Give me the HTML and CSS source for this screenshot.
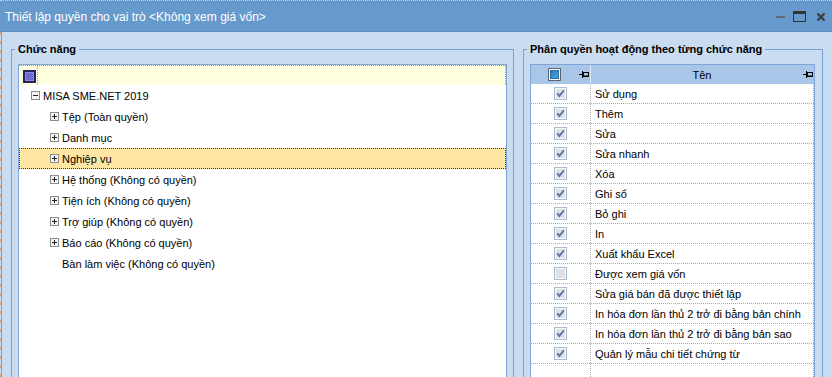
FILE: index.html
```html
<!DOCTYPE html>
<html lang="vi">
<head>
<meta charset="utf-8">
<title>Thiết lập quyền</title>
<link rel="stylesheet" href="styles.css">
</head>
<body>
<div class="window">
  <div class="titlebar">
    <span class="title">Thiết lập quyền cho vai trò &lt;Không xem giá vốn&gt;</span>
    <div class="controls">
      <svg class="ctl-min" width="9" height="11" viewBox="0 0 9 11"><rect x="0" y="5" width="9" height="2" fill="#5f6b7a"/></svg>
      <svg class="ctl-max" width="13" height="11" viewBox="0 0 13 11"><rect x="0.5" y="0.5" width="12" height="10" fill="none" stroke="#333"/><rect x="0" y="0" width="13" height="3" fill="#333"/></svg>
      <svg class="ctl-close" width="8" height="8" viewBox="0 0 8 8"><path d="M0.5 0.5L7.5 7.5M7.5 0.5L0.5 7.5" stroke="#3a3a3a" stroke-width="2"/></svg>
    </div>
  </div>
  <div class="main">
    <fieldset class="group group-left">
      <legend>Chức năng</legend>
      <div class="tree">
        <div class="tree-new"><span class="new-check"></span><span class="new-cell"></span></div>
        <div class="node lvl0">
          <svg class="exp" width="9" height="9" viewBox="0 0 9 9"><rect x="0.5" y="0.5" width="8" height="8" fill="#f4f4f4" stroke="#8c8c8c"/><path d="M2 4.5h5" stroke="#222"/></svg>
          <span>MISA SME.NET 2019</span>
        </div>
        <div class="node lvl1">
          <svg class="exp" width="9" height="9" viewBox="0 0 9 9"><rect x="0.5" y="0.5" width="8" height="8" fill="#f4f4f4" stroke="#8c8c8c"/><path d="M2 4.5h5M4.5 2v5" stroke="#222"/></svg>
          <span>Tệp (Toàn quyền)</span>
        </div>
        <div class="node lvl1">
          <svg class="exp" width="9" height="9" viewBox="0 0 9 9"><rect x="0.5" y="0.5" width="8" height="8" fill="#f4f4f4" stroke="#8c8c8c"/><path d="M2 4.5h5M4.5 2v5" stroke="#222"/></svg>
          <span>Danh mục</span>
        </div>
        <div class="node lvl1 selected">
          <svg class="exp" width="9" height="9" viewBox="0 0 9 9"><rect x="0.5" y="0.5" width="8" height="8" fill="#f4f4f4" stroke="#8c8c8c"/><path d="M2 4.5h5M4.5 2v5" stroke="#222"/></svg>
          <span>Nghiệp vụ</span>
        </div>
        <div class="node lvl1">
          <svg class="exp" width="9" height="9" viewBox="0 0 9 9"><rect x="0.5" y="0.5" width="8" height="8" fill="#f4f4f4" stroke="#8c8c8c"/><path d="M2 4.5h5M4.5 2v5" stroke="#222"/></svg>
          <span>Hệ thống (Không có quyền)</span>
        </div>
        <div class="node lvl1">
          <svg class="exp" width="9" height="9" viewBox="0 0 9 9"><rect x="0.5" y="0.5" width="8" height="8" fill="#f4f4f4" stroke="#8c8c8c"/><path d="M2 4.5h5M4.5 2v5" stroke="#222"/></svg>
          <span>Tiện ích (Không có quyền)</span>
        </div>
        <div class="node lvl1">
          <svg class="exp" width="9" height="9" viewBox="0 0 9 9"><rect x="0.5" y="0.5" width="8" height="8" fill="#f4f4f4" stroke="#8c8c8c"/><path d="M2 4.5h5M4.5 2v5" stroke="#222"/></svg>
          <span>Trợ giúp (Không có quyền)</span>
        </div>
        <div class="node lvl1">
          <svg class="exp" width="9" height="9" viewBox="0 0 9 9"><rect x="0.5" y="0.5" width="8" height="8" fill="#f4f4f4" stroke="#8c8c8c"/><path d="M2 4.5h5M4.5 2v5" stroke="#222"/></svg>
          <span>Báo cáo (Không có quyền)</span>
        </div>
        <div class="node lvl1 leaf">
          <span>Bàn làm việc (Không có quyền)</span>
        </div>
      </div>
    </fieldset>

    <fieldset class="group group-right">
      <legend>Phân quyền hoạt động theo từng chức năng</legend>
      <div class="grid">
        <div class="grid-head">
          <div class="hc hc-check">
            <span class="hcheck"></span>
            <svg class="pin" width="10" height="7" viewBox="0 0 10 7"><path d="M0 3.5h3M3.5 0v7" stroke="#000"/><rect x="4.5" y="1.5" width="5" height="4" fill="none" stroke="#000"/><path d="M4 5h6" stroke="#000"/></svg>
          </div>
          <div class="hc hc-name">
            <span class="hname">Tên</span>
            <svg class="pin" width="10" height="7" viewBox="0 0 10 7"><path d="M0 3.5h3M3.5 0v7" stroke="#000"/><rect x="4.5" y="1.5" width="5" height="4" fill="none" stroke="#000"/><path d="M4 5h6" stroke="#000"/></svg>
          </div>
        </div>
        <div class="row"><div class="c1"><svg class="cb" width="13" height="13" viewBox="0 0 13 13"><rect x="0.5" y="0.5" width="12" height="12" fill="#f7f7f7" stroke="#a7bbd9"/><rect x="2" y="2" width="9" height="9" fill="#e1e1e1"/><path d="M3.2 6.3l2.2 2.6L9.8 3.4" fill="none" stroke="#5a77a3" stroke-width="1.9"/></svg></div><div class="c2">Sử dụng</div></div>
        <div class="row"><div class="c1"><svg class="cb" width="13" height="13" viewBox="0 0 13 13"><rect x="0.5" y="0.5" width="12" height="12" fill="#f7f7f7" stroke="#a7bbd9"/><rect x="2" y="2" width="9" height="9" fill="#e1e1e1"/><path d="M3.2 6.3l2.2 2.6L9.8 3.4" fill="none" stroke="#5a77a3" stroke-width="1.9"/></svg></div><div class="c2">Thêm</div></div>
        <div class="row"><div class="c1"><svg class="cb" width="13" height="13" viewBox="0 0 13 13"><rect x="0.5" y="0.5" width="12" height="12" fill="#f7f7f7" stroke="#a7bbd9"/><rect x="2" y="2" width="9" height="9" fill="#e1e1e1"/><path d="M3.2 6.3l2.2 2.6L9.8 3.4" fill="none" stroke="#5a77a3" stroke-width="1.9"/></svg></div><div class="c2">Sửa</div></div>
        <div class="row"><div class="c1"><svg class="cb" width="13" height="13" viewBox="0 0 13 13"><rect x="0.5" y="0.5" width="12" height="12" fill="#f7f7f7" stroke="#a7bbd9"/><rect x="2" y="2" width="9" height="9" fill="#e1e1e1"/><path d="M3.2 6.3l2.2 2.6L9.8 3.4" fill="none" stroke="#5a77a3" stroke-width="1.9"/></svg></div><div class="c2">Sửa nhanh</div></div>
        <div class="row"><div class="c1"><svg class="cb" width="13" height="13" viewBox="0 0 13 13"><rect x="0.5" y="0.5" width="12" height="12" fill="#f7f7f7" stroke="#a7bbd9"/><rect x="2" y="2" width="9" height="9" fill="#e1e1e1"/><path d="M3.2 6.3l2.2 2.6L9.8 3.4" fill="none" stroke="#5a77a3" stroke-width="1.9"/></svg></div><div class="c2">Xóa</div></div>
        <div class="row"><div class="c1"><svg class="cb" width="13" height="13" viewBox="0 0 13 13"><rect x="0.5" y="0.5" width="12" height="12" fill="#f7f7f7" stroke="#a7bbd9"/><rect x="2" y="2" width="9" height="9" fill="#e1e1e1"/><path d="M3.2 6.3l2.2 2.6L9.8 3.4" fill="none" stroke="#5a77a3" stroke-width="1.9"/></svg></div><div class="c2">Ghi sổ</div></div>
        <div class="row"><div class="c1"><svg class="cb" width="13" height="13" viewBox="0 0 13 13"><rect x="0.5" y="0.5" width="12" height="12" fill="#f7f7f7" stroke="#a7bbd9"/><rect x="2" y="2" width="9" height="9" fill="#e1e1e1"/><path d="M3.2 6.3l2.2 2.6L9.8 3.4" fill="none" stroke="#5a77a3" stroke-width="1.9"/></svg></div><div class="c2">Bỏ ghi</div></div>
        <div class="row"><div class="c1"><svg class="cb" width="13" height="13" viewBox="0 0 13 13"><rect x="0.5" y="0.5" width="12" height="12" fill="#f7f7f7" stroke="#a7bbd9"/><rect x="2" y="2" width="9" height="9" fill="#e1e1e1"/><path d="M3.2 6.3l2.2 2.6L9.8 3.4" fill="none" stroke="#5a77a3" stroke-width="1.9"/></svg></div><div class="c2">In</div></div>
        <div class="row"><div class="c1"><svg class="cb" width="13" height="13" viewBox="0 0 13 13"><rect x="0.5" y="0.5" width="12" height="12" fill="#f7f7f7" stroke="#a7bbd9"/><rect x="2" y="2" width="9" height="9" fill="#e1e1e1"/><path d="M3.2 6.3l2.2 2.6L9.8 3.4" fill="none" stroke="#5a77a3" stroke-width="1.9"/></svg></div><div class="c2">Xuất khẩu Excel</div></div>
        <div class="row"><div class="c1"><svg class="cb" width="13" height="13" viewBox="0 0 13 13"><rect x="0.5" y="0.5" width="12" height="12" fill="#f7f7f7" stroke="#a7bbd9"/><rect x="2" y="2" width="9" height="9" fill="#e1e1e1"/></svg></div><div class="c2">Được xem giá vốn</div></div>
        <div class="row"><div class="c1"><svg class="cb" width="13" height="13" viewBox="0 0 13 13"><rect x="0.5" y="0.5" width="12" height="12" fill="#f7f7f7" stroke="#a7bbd9"/><rect x="2" y="2" width="9" height="9" fill="#e1e1e1"/><path d="M3.2 6.3l2.2 2.6L9.8 3.4" fill="none" stroke="#5a77a3" stroke-width="1.9"/></svg></div><div class="c2">Sửa giá bán đã được thiết lập</div></div>
        <div class="row"><div class="c1"><svg class="cb" width="13" height="13" viewBox="0 0 13 13"><rect x="0.5" y="0.5" width="12" height="12" fill="#f7f7f7" stroke="#a7bbd9"/><rect x="2" y="2" width="9" height="9" fill="#e1e1e1"/><path d="M3.2 6.3l2.2 2.6L9.8 3.4" fill="none" stroke="#5a77a3" stroke-width="1.9"/></svg></div><div class="c2">In hóa đơn lần thủ 2 trở đi bằng bản chính</div></div>
        <div class="row"><div class="c1"><svg class="cb" width="13" height="13" viewBox="0 0 13 13"><rect x="0.5" y="0.5" width="12" height="12" fill="#f7f7f7" stroke="#a7bbd9"/><rect x="2" y="2" width="9" height="9" fill="#e1e1e1"/><path d="M3.2 6.3l2.2 2.6L9.8 3.4" fill="none" stroke="#5a77a3" stroke-width="1.9"/></svg></div><div class="c2">In hóa đơn lần thủ 2 trở đi bằng bản sao</div></div>
        <div class="row"><div class="c1"><svg class="cb" width="13" height="13" viewBox="0 0 13 13"><rect x="0.5" y="0.5" width="12" height="12" fill="#f7f7f7" stroke="#a7bbd9"/><rect x="2" y="2" width="9" height="9" fill="#e1e1e1"/><path d="M3.2 6.3l2.2 2.6L9.8 3.4" fill="none" stroke="#5a77a3" stroke-width="1.9"/></svg></div><div class="c2">Quản lý mẫu chi tiết chứng từ</div></div>
        <div class="row fill"><div class="c1"></div><div class="c2"></div></div>
      </div>
    </fieldset>
  </div>
</div>
</body>
</html>
```
FILE: styles.css
```css
html, body {
  margin: 0;
  padding: 0;
}
body {
  width: 832px;
  height: 377px;
  overflow: hidden;
  background: #cadcf0;
  font-family: "Liberation Sans", Arial, sans-serif;
  font-size: 11px;
  color: #000;
}
.window {
  width: 832px;
  height: 377px;
  display: flex;
  flex-direction: column;
}
.titlebar {
  flex: 0 0 auto;
  box-sizing: border-box;
  border-top: 1px dotted #c9d3df;
  border-bottom: 1px solid #5e8ec3;
  height: 32px;
  background: #6699cc;
  display: flex;
  align-items: center;
  padding-left: 5px;
  padding-right: 7px;
  color: #fff;
  font-size: 12px;
}
.title {
  white-space: nowrap;
  margin-top: 1px;
}
.controls {
  margin-left: auto;
  display: flex;
  align-items: center;
}
.ctl-min { margin-right: 8px; }
.ctl-max { margin-right: 11px; }
.ctl-close { margin-top: 1px; }
svg { display: block; }

.main {
  flex: 1 1 auto;
  display: flex;
  gap: 9px;
  padding: 10px 0 0 11px;
  background-image:
    repeating-linear-gradient(to bottom, #e0a46c 0 3px, transparent 3px 9px),
    linear-gradient(#7ba1d0, #7ba1d0);
  background-size: 1px 100%, 1px 100%;
  background-position: 0 0, 1px 0;
  background-repeat: no-repeat;
  overflow: hidden;
}

.group {
  margin: 0;
  padding: 8px 7px 0 6px;
  border: 1px solid #7ba1d0;
  box-sizing: border-box;
  height: 400px;
  min-width: 0;
  flex: 0 0 auto;
}
.group legend {
  padding: 0 3px;
  margin-left: -3px;
  font-weight: bold;
  font-size: 11px;
  line-height: 14px;
  color: #000;
}
.group-left { width: 503px; padding-right: 6px; }
.group-right { width: 300px; }

/* tree */
.tree {
  background: #fff;
  border: 1px solid #7ea6d8;
  height: 380px;
  box-sizing: border-box;
}
.tree-new {
  height: 20px;
  box-sizing: border-box;
  background: #ffffe0;
  border-top: 1px dotted #9a9a9a;
  border-right: 1px dotted #9a9a9a;
  display: flex;
  align-items: center;
  padding-left: 4px;
}
.new-check {
  width: 13px;
  height: 13px;
  box-sizing: border-box;
  border: 2px solid #23235f;
  background: #6b6bd4;
  box-shadow: inset 0 0 0 1px #8c8ce0;
  margin-top: 1px;
}
.new-cell {
  align-self: stretch;
  margin-left: 1px;
  border-left: 1px dotted #9a9a9a;
}
.node {
  height: 21px;
  box-sizing: border-box;
  border: 1px solid transparent;
  display: flex;
  align-items: center;
  white-space: nowrap;
}
.node .exp { margin-right: 3px; }
.lvl0 { padding-left: 11px; }
.lvl1 { padding-left: 30px; }
.leaf { padding-left: 42px; }
.node.selected {
  background: #ffe6a3;
  border: 1px dotted #3a3a3a;
}

/* grid */
.grid {
  background: #fff;
  border: 1px solid #7ea6d8;
  height: 380px;
  box-sizing: border-box;
  display: flex;
  flex-direction: column;
}
.grid-head {
  height: 19px;
  flex: 0 0 auto;
  background: #a9c6e9;
  display: grid;
  grid-template-columns: 60px 1fr;
}
.hc {
  display: flex;
  align-items: center;
}
.hc-check {
  border-right: 1px solid #dbe8f6;
  padding-left: 17px;
  padding-right: 1px;
  justify-content: space-between;
}
.hcheck {
  width: 13px;
  height: 13px;
  box-sizing: border-box;
  border: 1px solid #5b6470;
  background: linear-gradient(135deg, #1f74b3, #4fb3ea);
  box-shadow: inset 0 0 0 1px #fff, inset 0 0 0 2px #2a6c9e;
}
.hc-name {
  display: grid;
  grid-template-columns: 1fr auto 1fr;
  align-items: center;
  padding-right: 1px;
}
.hname {
  grid-column: 2;
}
.hc-name .pin {
  grid-column: 3;
  justify-self: end;
}
.row {
  height: 20px;
  flex: 0 0 auto;
  box-sizing: border-box;
  display: grid;
  grid-template-columns: 60px 1fr;
  border-bottom: 1px dotted #a8a8a8;
}
.row .c1 {
  border-right: 1px dotted #a8a8a8;
  display: flex;
  align-items: center;
  justify-content: center;
}
.row .c2 {
  border-right: 1px dotted #a8a8a8;
  padding-left: 4px;
  display: flex;
  align-items: center;
  white-space: nowrap;
}
.row.fill {
  flex: 1 1 auto;
  border-bottom: 0;
}
```
